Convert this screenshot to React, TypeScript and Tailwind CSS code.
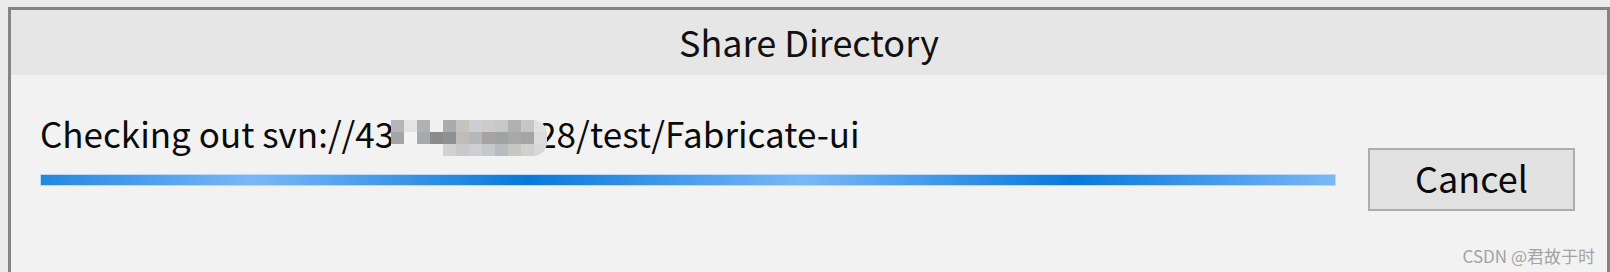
import React from "react";

const mosaic = [
  ["#b4b6b8", "#e4e4e4", "#b0b1b3", "#f0f0f0", "#a9abae", "#c5c3c0", "#cbced2", "#cdcac7", "#c6c7ca", "#b0b0ae", "#c4c6c8", "#e2e2e0"],
  ["#a2a4a6", "#f4f4f4", "#a8a9ab", "#8c8c8c", "#8e9092", "#c0bcb6", "#b5b9be", "#a4a3a0", "#a0a2a4", "#a8a8a6", "#a3a5a7", "#dcdcda"],
  ["#f2f2f2", "#f2f2f2", "#f2f2f2", "#f2f2f2", "#d2d2d2", "#c9c9c9", "#cdcfd1", "#c6c7c9", "#b9bcbe", "#c8c6c3", "#d0d0d0", "#d8d8d8"],
];

const Mosaic = () => (
  <span className="absolute left-[-3px] top-[-4px] grid grid-cols-[repeat(12,13px)] grid-rows-[repeat(3,12px)] overflow-hidden rounded-r-[14px]">
    {mosaic.flat().map((c, i) => (
      <span key={i} className="block" style={{ backgroundColor: c }} />
    ))}
  </span>
);

const App = () => {
  return (
    <div
      className="h-[272px] w-full overflow-hidden bg-[#ececec] pl-[8px] pt-[7px]"
      style={{ fontFamily: '"Noto Sans CJK SC", "Noto Sans", sans-serif' }}
    >
      <div className="relative flex h-[265px] w-[1602px] flex-col border-[3px] border-b-0 border-[#848484] bg-[#f2f2f2]">
        <div className="flex h-[65px] items-center justify-center bg-[#e6e6e6] pb-[4px]">
          <h1 className="text-[36px] leading-none text-[#111]">Share Directory</h1>
        </div>
        <div className="flex pl-[29px] pr-[32px]">
          <div className="flex w-[1296px] flex-col">
            <p className="mt-[34px] whitespace-nowrap text-[35px] leading-[48px] text-[#0a0a0a]">
              Checking out svn://43
              <span className="relative inline-block h-[30px] w-[143px] align-middle">
                <Mosaic />
              </span>
              28/test/Fabricate-ui
            </p>
            <div className="mt-[17px] h-[12px] w-full border border-[#b9d9f7] bg-[linear-gradient(90deg,#2486de_0%,#7ab8f5_16.3%,#0a78d8_37.6%,#7ab8f5_58.7%,#0a78d8_79.8%,#7ab8f5_100%)]" />
          </div>
          <button className="ml-auto mt-[73px] h-[63px] w-[207px] border-2 border-[#adadad] bg-[#e1e1e1] pb-[5px] text-[36px] leading-none text-[#0a0a0a]">
            Cancel
          </button>
        </div>
        <span className="absolute bottom-[8px] right-[12px] text-[17px] leading-none text-[#a3a3a3]">
          CSDN @君故于时
        </span>
      </div>
    </div>
  );
};

export default App;
